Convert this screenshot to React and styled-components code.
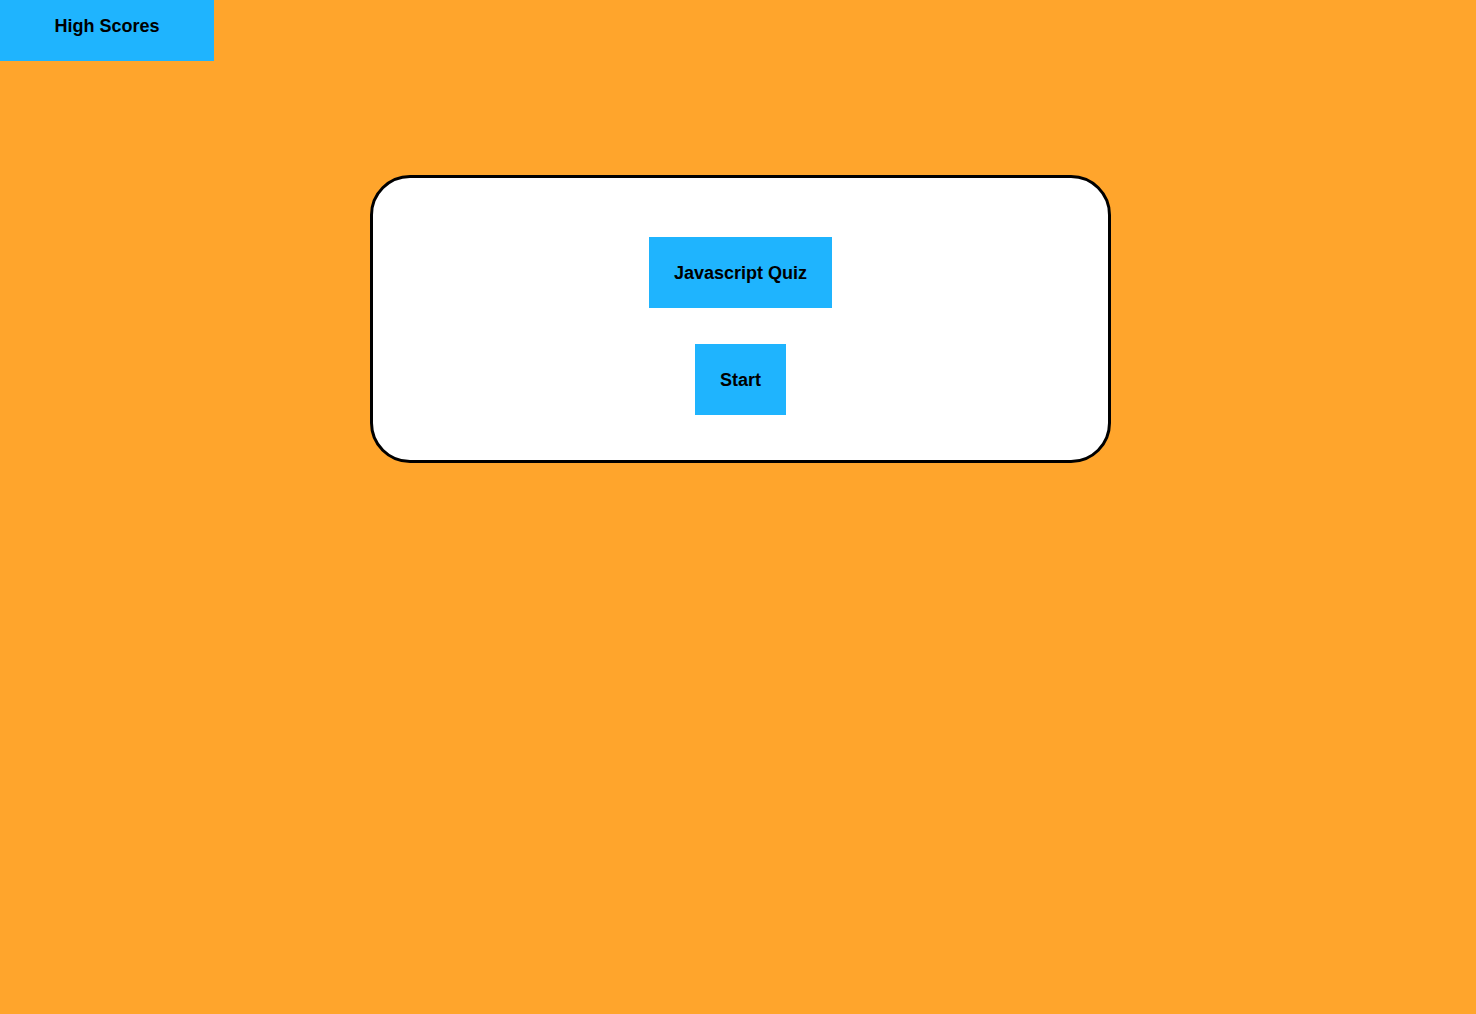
import React from 'react';
import styled, { createGlobalStyle } from 'styled-components';

const GlobalStyle = createGlobalStyle`
  html, body {
    margin: 0;
    padding: 0;
    background: #ffa52c;
    font-family: "Liberation Sans", Arial, sans-serif;
  }
`;

const Page = styled.div`
  min-height: 1014px;
  background: #ffa52c;
`;

const Header = styled.header`
  display: flex;
`;

const ScoresLink = styled.div`
  width: 214px;
  height: 61px;
  box-sizing: border-box;
  padding-top: 16px;
  background: #1fb4fe;
  color: #000;
  font-size: 18px;
  font-weight: bold;
  line-height: 21px;
  text-align: center;
`;

const Main = styled.main`
  padding: 114px 0 0 370px;
`;

const Card = styled.section`
  width: 741px;
  height: 288px;
  box-sizing: border-box;
  border: 3px solid #000;
  border-radius: 40px;
  background: #fff;
  display: flex;
  flex-direction: column;
  align-items: center;
  gap: 36px;
  padding-top: 59px;
`;

const Tile = styled.div`
  background: #1fb4fe;
  color: #000;
  font-size: 18px;
  font-weight: bold;
  line-height: 21px;
  padding: 26px 25px 24px;
  cursor: ${p => (p.$clickable ? 'pointer' : 'default')};
`;

export default function App() {
  return (
    <Page>
      <GlobalStyle />
      <Header>
        <ScoresLink>High Scores</ScoresLink>
      </Header>
      <Main>
        <Card>
          <Tile>Javascript Quiz</Tile>
          <Tile $clickable>Start</Tile>
        </Card>
      </Main>
    </Page>
  );
}
